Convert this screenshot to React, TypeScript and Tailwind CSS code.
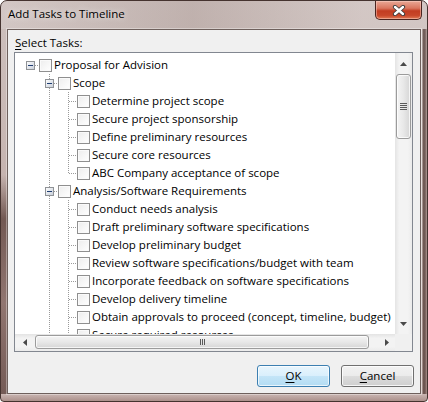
import React from "react";

type TreeRow = {
  label: string;
  guides: boolean[];
  kind: "root" | "child";
  expander?: boolean;
  last?: boolean;
};

const rows: TreeRow[] = [
  { label: "Proposal for Advision", guides: [], kind: "root", expander: true },
  { label: "Scope", guides: [false], kind: "child", expander: true },
  { label: "Determine project scope", guides: [false, true], kind: "child" },
  { label: "Secure project sponsorship", guides: [false, true], kind: "child" },
  { label: "Define preliminary resources", guides: [false, true], kind: "child" },
  { label: "Secure core resources", guides: [false, true], kind: "child" },
  { label: "ABC Company acceptance of scope", guides: [false, true], kind: "child", last: true },
  { label: "Analysis/Software Requirements", guides: [false], kind: "child", expander: true },
  { label: "Conduct needs analysis", guides: [false, true], kind: "child" },
  { label: "Draft preliminary software specifications", guides: [false, true], kind: "child" },
  { label: "Develop preliminary budget", guides: [false, true], kind: "child" },
  { label: "Review software specifications/budget with team", guides: [false, true], kind: "child" },
  { label: "Incorporate feedback on software specifications", guides: [false, true], kind: "child" },
  { label: "Develop delivery timeline", guides: [false, true], kind: "child" },
  { label: "Obtain approvals to proceed (concept, timeline, budget)", guides: [false, true], kind: "child" },
  { label: "Secure required resources", guides: [false, true], kind: "child" },
];

const DOT = "#9a9a9a";

function Guide({ on }: { on: boolean }) {
  return (
    <svg width="19" height="18" viewBox="0 0 19 18" className="shrink-0">
      {on && <line x1="10.5" y1="0" x2="10.5" y2="18" stroke={DOT} strokeDasharray="1 1" />}
    </svg>
  );
}

function Connector({ row, id }: { row: TreeRow; id: number }) {
  return (
    <svg width="19" height="18" viewBox="0 0 19 18" className="shrink-0">
      <defs>
        <linearGradient id={`exp${id}`} x1="0" y1="0" x2="1" y2="1">
          <stop offset="0" stopColor="#ffffff" />
          <stop offset="1" stopColor="#c6cdd8" />
        </linearGradient>
      </defs>
      {row.kind === "child" && (
        <line x1="10.5" y1="0" x2="10.5" y2={row.last ? 10 : 18} stroke={DOT} strokeDasharray="1 1" />
      )}
      <line x1={row.kind === "root" ? 15 : 11} y1="9.5" x2="19" y2="9.5" stroke={DOT} strokeDasharray="1 1" />
      {row.expander && (
        <>
          <rect x="6.5" y="5.5" width="8" height="8" fill={`url(#exp${id})`} stroke="#8f9296" />
          <line x1="8" y1="9.5" x2="13" y2="9.5" stroke="#1f3d72" />
        </>
      )}
    </svg>
  );
}

function Checkbox() {
  return (
    <div className="h-[13px] w-[13px] shrink-0 border border-[#8f8f8f] bg-[linear-gradient(135deg,#ededed,#ffffff)] shadow-[inset_0_0_0_1px_#fafafa]" />
  );
}

function Arrow({ dir }: { dir: "up" | "down" | "left" | "right" }) {
  const pts = {
    up: "0,4 3.5,0 7,4",
    down: "0,0 7,0 3.5,4",
    left: "4,0 4,7 0,3.5",
    right: "0,0 4,3.5 0,7",
  }[dir];
  const vertical = dir === "up" || dir === "down";
  return (
    <svg width={vertical ? 7 : 4} height={vertical ? 4 : 7} className="shrink-0">
      <polygon points={pts} fill="#4a4a4a" />
    </svg>
  );
}

function VScroll() {
  return (
    <div className="flex w-[17px] shrink-0 flex-col bg-[linear-gradient(90deg,#e4e4e4,#f3f3f3_25%,#f3f3f3_75%,#ebebeb)]">
      <div className="flex h-[17px] items-end justify-center pb-[4px]">
        <Arrow dir="up" />
      </div>
      <div className="flex-1 px-[1px] pt-[4px]">
        <div className="flex h-[65px] items-center justify-center rounded-[3px] border border-[#9b9b9b] bg-[linear-gradient(90deg,#f4f4f4,#e8e8e8_50%,#d6d6d6)] shadow-[inset_0_0_0_1px_rgba(255,255,255,0.75)]">
          <div className="flex w-[7px] flex-col gap-[1px]">
            <div className="h-[1px] bg-[#5a5a5a]" />
            <div className="h-[1px] bg-[#5a5a5a]" />
            <div className="h-[1px] bg-[#5a5a5a]" />
            <div className="h-[1px] bg-[#5a5a5a]" />
          </div>
        </div>
      </div>
      <div className="flex h-[17px] items-start justify-center pt-[5px]">
        <Arrow dir="down" />
      </div>
    </div>
  );
}

function HScroll() {
  return (
    <div className="flex h-[17px] flex-1 bg-[linear-gradient(180deg,#e4e4e4,#f3f3f3_25%,#f3f3f3_75%,#ebebeb)]">
      <div className="flex w-[17px] items-center pl-[8px]">
        <Arrow dir="left" />
      </div>
      <div className="flex-1 pl-[3px] pt-[1px]">
        <div className="flex h-[14px] w-[334px] items-center justify-center rounded-[3px] border border-[#9b9b9b] bg-[linear-gradient(180deg,#f4f4f4,#e8e8e8_50%,#d6d6d6)] shadow-[inset_0_0_0_1px_rgba(255,255,255,0.75)]">
          <div className="flex h-[6px] gap-[1px]">
            <div className="w-[1px] bg-[#5a5a5a]" />
            <div className="w-[1px] bg-[#5a5a5a]" />
            <div className="w-[1px] bg-[#5a5a5a]" />
          </div>
        </div>
      </div>
      <div className="flex w-[17px] items-center justify-center">
        <Arrow dir="right" />
      </div>
    </div>
  );
}

function CloseButton() {
  return (
    <div className="flex h-[19px] w-[47px] items-center justify-center rounded-b-[5px] border border-t-0 border-[#4a2520] bg-[linear-gradient(180deg,#e9a896_0%,#d9765f_40%,#c23d22_55%,#c8472a_80%,#e07a55_100%)] shadow-[inset_0_0_0_1px_rgba(255,220,210,0.45)]">
      <svg width="14" height="11" viewBox="0 0 14 11">
        <path d="M3 2 L11 9 M11 2 L3 9" stroke="#3b3b3b" strokeWidth="4.2" strokeLinecap="round" />
        <path d="M3 2 L11 9 M11 2 L3 9" stroke="#ffffff" strokeWidth="2.4" strokeLinecap="round" />
      </svg>
    </div>
  );
}

export default function App() {
  return (
    <div className="h-[402px] w-[428px] font-['Open_Sans','Noto_Sans',sans-serif] text-[11.5px] text-black">
      <div className="flex h-full w-full flex-col overflow-hidden rounded-t-[7px] rounded-b-[4px] border border-[#45332f] bg-[linear-gradient(180deg,#cdc0bd_0%,#c8b7b3_35%,#bfa8a3_70%,#b89d98_100%)]">
        <div className="flex h-[28px] shrink-0 justify-between bg-[linear-gradient(90deg,rgba(255,255,255,0.12),rgba(140,120,115,0.2)_45%,rgba(255,255,255,0.12)_85%)]">
          <div className="pl-[7px] pt-[5px] leading-[16px] [text-shadow:0_0_6px_rgba(255,255,255,0.9)]">
            Add Tasks to Timeline
          </div>
          <div className="pr-[5px]">
            <CloseButton />
          </div>
        </div>

        <div className="flex h-[365px] shrink-0">
          <div className="w-[6px] shrink-0 bg-[linear-gradient(180deg,transparent_0%,transparent_40%,rgba(80,52,46,0.7)_52%,rgba(100,70,64,0.5)_75%,rgba(80,55,50,0.65)_100%)]" />
          <div className="flex w-[414px] flex-col border border-[#6e605c] bg-[#f0f0f0] shadow-[0_0_0_1px_rgba(255,255,255,0.35)]">
            <div className="mt-[5px] h-[16px] pl-[7px] leading-[16px]">
              <span className="underline decoration-1 underline-offset-[2px]">S</span>elect Tasks:
            </div>
            <div className="ml-[6px] mt-[1px] flex h-[300px] w-[399px] flex-col border border-[#828790] bg-white">
              <div className="flex min-h-0 flex-1">
                <div className="flex-1 overflow-hidden pl-[5px] pt-[3px]">
                  {rows.map((row, i) => (
                    <div key={i} className="flex h-[18px] items-center">
                      {row.guides.map((g, j) => (
                        <Guide key={j} on={g} />
                      ))}
                      <Connector row={row} id={i} />
                      <Checkbox />
                      <span className="ml-[2px] whitespace-nowrap leading-[18px]">{row.label}</span>
                    </div>
                  ))}
                </div>
                <VScroll />
              </div>
              <div className="flex h-[17px] shrink-0">
                <HScroll />
                <div className="w-[17px] bg-[#f0f0f0]" />
              </div>
            </div>
            <div className="mt-[13px] flex justify-end gap-[11px] pr-[6px]">
              <button className="flex h-[22px] w-[73px] items-center justify-center rounded-[3px] border border-[#3c7fb1] bg-[linear-gradient(180deg,#e8f5fd_0%,#d9effc_50%,#c4e5f8_50%,#b3dcf3_100%)] shadow-[inset_0_0_0_1px_rgba(255,255,255,0.7)]">
                <span>
                  <span className="underline decoration-1 underline-offset-[2px]">O</span>K
                </span>
              </button>
              <button className="flex h-[22px] w-[73px] items-center justify-center rounded-[3px] border border-[#707070] bg-[linear-gradient(180deg,#f2f2f2_0%,#ebebeb_50%,#dddddd_50%,#cfcfcf_100%)] shadow-[inset_0_0_0_1px_rgba(255,255,255,0.8)]">
                <span>
                  <span className="underline decoration-1 underline-offset-[2px]">C</span>ancel
                </span>
              </button>
            </div>
          </div>
          <div className="w-[6px] shrink-0 bg-[linear-gradient(90deg,rgba(255,255,255,0.35)_0px,rgba(255,255,255,0.35)_1px,rgba(85,62,57,0.75)_2px,rgba(85,62,57,0.75)_4px,rgba(150,125,120,0.4)_6px)]" />
        </div>

        <div className="flex-1 bg-[linear-gradient(180deg,rgba(255,255,255,0.25),rgba(120,90,85,0.2))]" />
      </div>
    </div>
  );
}
